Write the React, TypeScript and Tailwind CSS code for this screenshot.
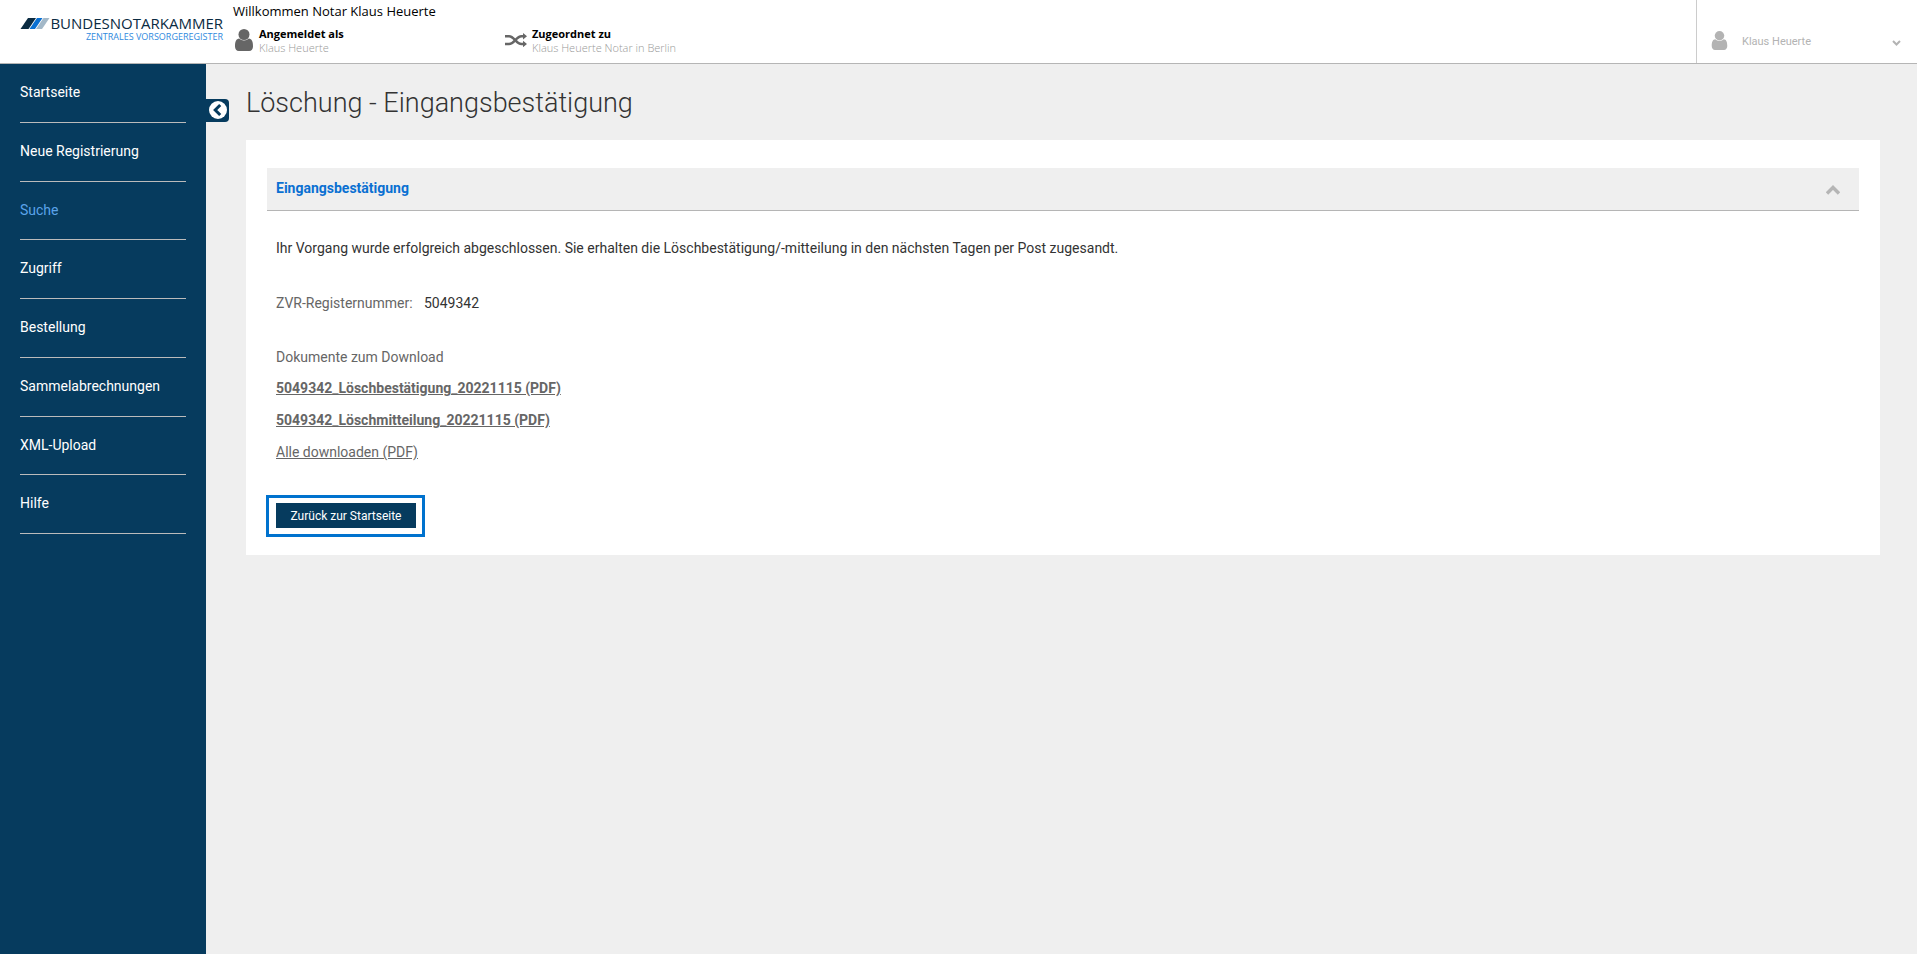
import React, { useState } from "react";

const navItems = [
  "Startseite",
  "Neue Registrierung",
  "Suche",
  "Zugriff",
  "Bestellung",
  "Sammelabrechnungen",
  "XML-Upload",
  "Hilfe",
];

function UserIcon({ className }: { className: string }) {
  return (
    <svg viewBox="0 0 18 22" className={className} fill="currentColor" aria-hidden="true">
      <path d="M4.2 9.6C1.2 9.8 0 12.6 0 17.4C0 20 1.5 22 3.8 22H14.2C16.5 22 18 20 18 17.4C18 12.6 16.8 9.8 13.8 9.6C12.5 10.9 10.8 11.6 9 11.6C7.2 11.6 5.5 10.9 4.2 9.6Z" />
      <circle cx="9" cy="5.5" r="5.5" />
    </svg>
  );
}

function ShuffleIcon() {
  return (
    <svg viewBox="0 0 22 14" className="mb-[2px] h-[14px] w-[22px] shrink-0 text-[#666]" fill="none" stroke="currentColor" strokeWidth="2.4" aria-hidden="true">
      <path d="M0 3.200H4C9.500 3.200 11 11 16.500 11H18.500" />
      <path d="M0 11H4C9.500 11 11 3.200 16.500 3.200H18.500" />
      <path d="M18 0L22 3.200L18 6.400Z M18 7.800L22 11L18 14.200Z" fill="currentColor" stroke="none" />
    </svg>
  );
}

function Logo() {
  return (
    <a href="#start" className="mt-[13px] ml-5 flex w-[203px] items-start" aria-label="Bundesnotarkammer Zentrales Vorsorgeregister">
      <svg viewBox="0 0 30 11" className="mt-[5px] h-[11px] w-[30px] shrink-0" aria-hidden="true">
        <path d="M8 0H16L8.500 11H0.500Z" fill="#0b2b42" />
        <path d="M17 0H22.500L15 11H9.500Z" fill="#0a70d2" />
        <path d="M23.500 0H29.500L22 11H16Z" fill="#a3b8c8" />
      </svg>
      <span className="flex flex-1 flex-col items-end whitespace-nowrap font-['Open_Sans',sans-serif]">
        <span className="text-[15px] leading-[20px] font-medium text-[#0b2b42]">BUNDESNOTARKAMMER</span>
        <span className="text-[9px] leading-[8px] text-[#2f8ade]">ZENTRALES VORSORGEREGISTER</span>
      </span>
    </a>
  );
}

function HeaderInfo({ icon, label, value }: { icon: React.ReactNode; label: string; value: string }) {
  return (
    <div className="flex w-[272px] items-center gap-[5px]">
      {icon}
      <div className="text-[11px] leading-[14px]">
        <div className="font-bold text-black">{label}</div>
        <div className="font-light text-[#999]">{value}</div>
      </div>
    </div>
  );
}

export default function App() {
  const [open, setOpen] = useState(true);

  return (
    <div className="flex min-h-screen flex-col bg-[#efefef] font-['Roboto',sans-serif] text-[14px] text-[#333]">
      <header className="flex h-16 border-b border-[#b5b5b5] bg-white">
        <Logo />
        <div className="ml-[10px] flex-1 font-['Open_Sans',sans-serif]">
          <p className="mt-px text-[13px] leading-[20px] text-black">Willkommen Notar Klaus Heuerte</p>
          <div className="mt-[6px] flex">
            <HeaderInfo icon={<UserIcon className="mr-px mb-[2px] ml-[2px] h-[22px] w-[18px] shrink-0 text-[#666]" />} label="Angemeldet als" value="Klaus Heuerte" />
            <HeaderInfo icon={<ShuffleIcon />} label="Zugeordnet zu" value="Klaus Heuerte Notar in Berlin" />
          </div>
        </div>
        <button type="button" className="flex w-[221px] items-center border-l border-[#ccc] pt-[18px] pr-4 pl-[14px] text-[11px] text-[#b3b3b3]">
          <UserIcon className="h-[19px] w-[17px]" />
          <span className="ml-[14px] flex-1 pt-[4px] text-left">Klaus Heuerte</span>
          <svg viewBox="0 0 9 6" className="mt-[5px] h-[6px] w-[9px]" fill="none" stroke="currentColor" strokeWidth="2" aria-hidden="true">
            <path d="M1 1L4.500 4.500L8 1" />
          </svg>
        </button>
      </header>

      <div className="flex flex-1">
        <nav className="w-[206px] shrink-0 bg-[#063b5e] px-5">
          <ul className="grid h-[470px] auto-rows-fr">
            {navItems.map((item) => (
              <li key={item} className="border-b border-[#bbb] pt-[18px]">
                <a href={"#" + item} className={item === "Suche" ? "leading-[20px] text-[#5ba3ea]" : "leading-[20px] text-white"}>
                  {item}
                </a>
              </li>
            ))}
          </ul>
        </nav>
        <button type="button" aria-label="Menü einklappen" className="mt-[35px] flex h-[23px] w-[23px] shrink-0 items-center justify-center rounded-r-[4px] bg-[#063b5e] pb-px pl-px">
          <svg viewBox="0 0 18 18" className="h-[18px] w-[18px]" aria-hidden="true">
            <circle cx="9" cy="9" r="9" fill="#fff" />
            <path d="M11.200 4L6.200 9L11.200 14" fill="none" stroke="#063b5e" strokeWidth="3" />
          </svg>
        </button>

        <main className="flex-1 pr-[37px] pl-[17px]">
          <h1 className="pt-[21px] text-[27px] leading-[36px] font-light">Löschung - Eingangsbestätigung</h1>
          <section className="mt-[19px] bg-white px-[21px] pt-[28px] pb-[18px]">
            <h2 className="border-b border-[#b5b5b5] bg-[#efefef] text-[14px] font-bold text-[#0a70d2]">
              <button type="button" aria-expanded={open} onClick={() => setOpen(!open)} className="flex h-[42px] w-full items-center justify-between pr-[19px] pl-[9px]">
                <span className="pb-[2px]">Eingangsbestätigung</span>
                <svg viewBox="0 0 14 10" className="mt-[2px] h-[10px] w-[14px] text-[#b5b5b5]" fill="none" stroke="currentColor" strokeWidth="3.4" aria-hidden="true">
                  <path d="M1 8.500L7 2.500L13 8.500" />
                </svg>
              </button>
            </h2>
            {open && (
              <div className="px-[9px] pt-[27px] leading-[20px]">
                <p>Ihr Vorgang wurde erfolgreich abgeschlossen. Sie erhalten die Löschbestätigung/-mitteilung in den nächsten Tagen per Post zugesandt.</p>
                <dl className="mt-[35px] flex">
                  <dt className="w-[148px] text-[#666]">ZVR-Registernummer:</dt>
                  <dd>5049342</dd>
                </dl>
                <p className="mt-[34px] text-[#666]">Dokumente zum Download</p>
                <div className="mt-[11px] flex flex-col items-start gap-[12px] text-[#666]">
                  <a href="#bestaetigung" className="font-bold underline">5049342_Löschbestätigung_20221115 (PDF)</a>
                  <a href="#mitteilung" className="font-bold underline">5049342_Löschmitteilung_20221115 (PDF)</a>
                  <a href="#alle" className="underline">Alle downloaden (PDF)</a>
                </div>
              </div>
            )}
            <div className="mt-[33px] -ml-px flex w-fit border-[3px] border-[#0072ce] pt-[5px] pr-[6px] pb-[6px] pl-[7px]">
              <button type="button" className="h-[25px] w-[140px] bg-[#063b5e] text-[12px] text-white">Zurück zur Startseite</button>
            </div>
          </section>
        </main>
      </div>
    </div>
  );
}
